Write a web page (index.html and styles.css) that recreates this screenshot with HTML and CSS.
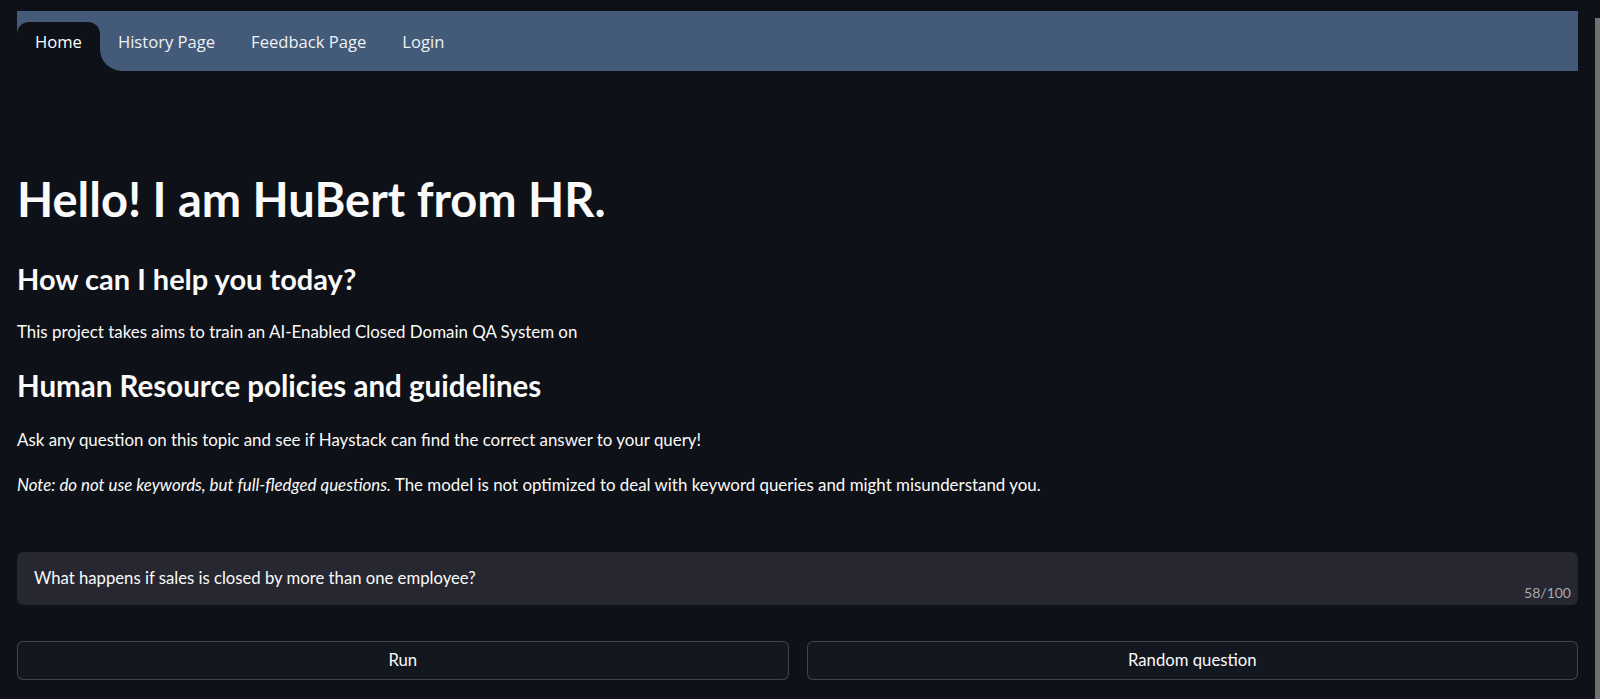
FILE: index.html
```html
<!DOCTYPE html>
<html lang="en">
<head>
<meta charset="utf-8">
<title>HuBert</title>
<link rel="stylesheet" href="styles.css">
</head>
<body>
<div class="app">
  <nav class="navbar">
    <div class="nav-home-wrap"><a class="nav-home">Home</a></div>
    <div class="nav-rest">
      <a class="nav-link">History Page</a>
      <a class="nav-link">Feedback Page</a>
      <a class="nav-link">Login</a>
    </div>
  </nav>
  <main class="content">
    <h1 class="title">Hello! I am HuBert from HR.</h1>
    <h3 class="subtitle">How can I help you today?</h3>
    <p class="text p1">This project takes aims to train an AI-Enabled Closed Domain QA System on</p>
    <h2 class="topic">Human Resource policies and guidelines</h2>
    <p class="text p2">Ask any question on this topic and see if Haystack can find the correct answer to your query!</p>
    <p class="text p3"><em>Note: do not use keywords, but full-fledged questions.</em> The model is not optimized to deal with keyword queries and might misunderstand you.</p>
    <div class="input-box">
      <span class="input-text">What happens if sales is closed by more than one employee?</span>
      <span class="counter">58/100</span>
    </div>
    <div class="buttons">
      <button class="btn">Run</button>
      <button class="btn">Random question</button>
    </div>
  </main>
</div>
<div class="scrollbar"></div>
</body>
</html>
```

FILE: styles.css
```css
* { box-sizing: border-box; }
html, body {
  margin: 0;
  padding: 0;
  background: #0e1117;
  overflow: hidden;
}
body {
  color: #fafafa;
  font-family: Lato, "Liberation Sans", sans-serif;
}
.app {
  padding: 11px 22px 0 17px;
}
.navbar {
  display: flex;
  height: 60px;
}
.nav-home-wrap {
  background: #435b79;
  padding-top: 11px;
}
.nav-home {
  display: block;
  height: 49px;
  padding: 8.5px 18px 0;
  background: #0e1117;
  border-radius: 12px 12px 0 0;
  font: 16.6px/22px "Open Sans", sans-serif;
  color: #ffffff;
}
.nav-rest {
  flex: 1;
  display: flex;
  background: #435b79;
  border-bottom-left-radius: 22px;
  padding-top: 19.5px;
}
.nav-link {
  padding: 0 18px;
  font: 16.6px/22px "Open Sans", sans-serif;
  color: #eef1f5;
}
.content {
  display: flex;
  flex-direction: column;
}
.title {
  margin: 99.8px 0 0;
  font-size: 47px;
  line-height: 56px;
  font-weight: 700;
}
.subtitle {
  margin: 35px 0 0;
  font-size: 29px;
  line-height: 34px;
  font-weight: 700;
}
.text {
  margin: 0;
  font-size: 16.9px;
  line-height: 26px;
}
.p1 { margin-top: 23.6px; }
.topic {
  margin: 22.8px 0 0;
  font-size: 29.5px;
  line-height: 36px;
  font-weight: 700;
}
.p2 { margin-top: 22.6px; }
.p3 { margin-top: 19.2px; }
.input-box {
  position: relative;
  margin-top: 54px;
  height: 53px;
  padding: 12.9px 17px 0;
  background: #262730;
  border-radius: 6px;
}
.input-text {
  font-size: 16.7px;
  line-height: 26px;
}
.counter {
  position: absolute;
  right: 7px;
  bottom: 5.4px;
  font-size: 14px;
  line-height: 14px;
  color: #a8a9ad;
}
.buttons {
  display: grid;
  grid-template-columns: 1fr 1fr;
  gap: 18px;
  margin-top: 36px;
}
.btn {
  height: 38.6px;
  background: #131720;
  border: 1px solid rgba(250, 250, 250, 0.2);
  border-radius: 6px;
  color: #fafafa;
  font-family: Lato, sans-serif;
  font-size: 16.7px;
}
.scrollbar {
  position: fixed;
  top: 18px;
  right: 0;
  width: 5px;
  bottom: 0;
  background: #707070;
}
```
